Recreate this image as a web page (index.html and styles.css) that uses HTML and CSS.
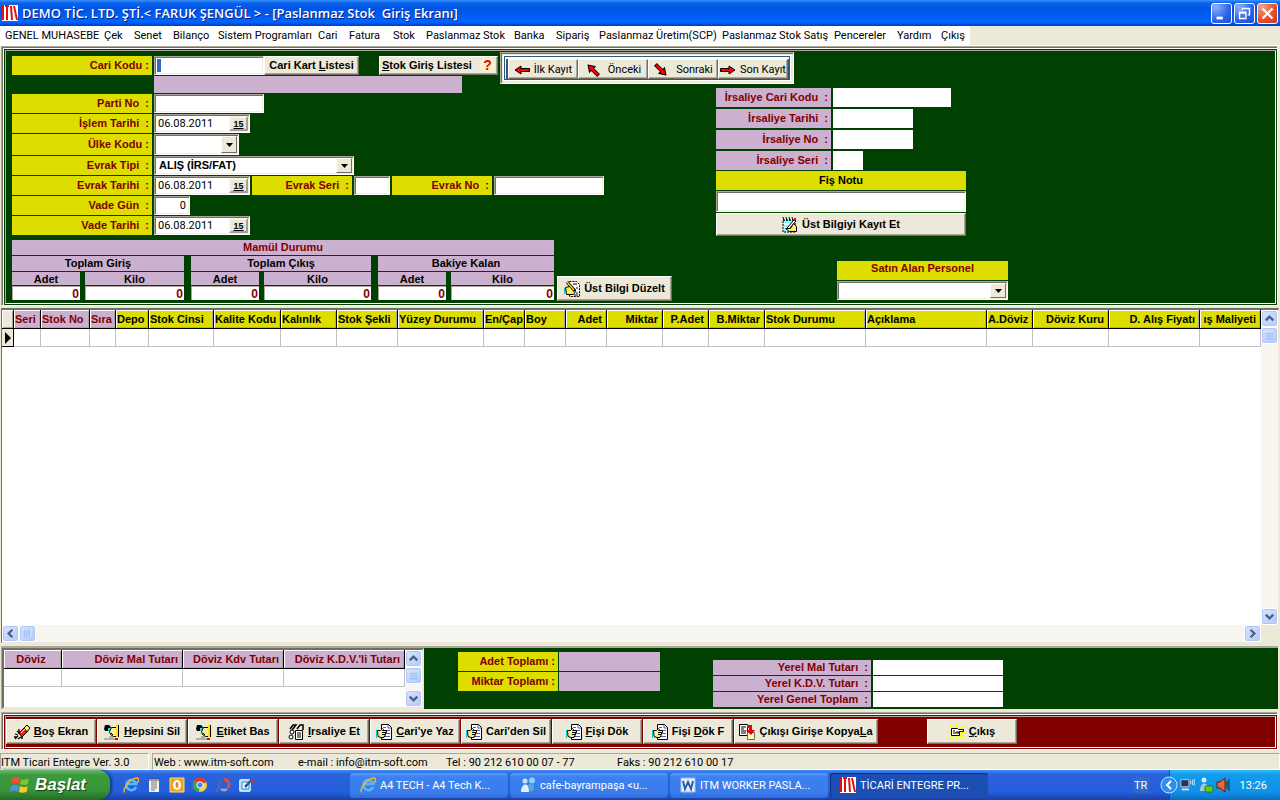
FILE: index.html
```
<!DOCTYPE html>
<html lang="tr">
<head>
<meta charset="utf-8">
<title>Paslanmaz Stok Giriş Ekranı</title>
<link rel="stylesheet" href="styles.css">
</head>
<body>
<svg class="defs" aria-hidden="true">
  <symbol id="logo" viewBox="0 0 16 16"><path fill="#fff" d="M0 0h16v16H0z"/><path fill="#e01010" d="M0 0h2v15H0zM3 0h4v2H6v13H4V2H3zM8 1h2l1 14H9zM11 1h2l3 14h-2z"/></symbol>
  <symbol id="arrow" viewBox="0 0 16 12"><path d="M1 6 7 2v8z" fill="#f00" stroke="#000"/><path d="M7 4.500h8.500v3H7" fill="#f00" stroke="#000"/><path d="M5 5h9v2H5z" fill="#f00"/></symbol>
  <symbol id="hand" viewBox="0 0 16 16"><path d="M5.500.5h7l3 3v12h-10z" fill="#fff" stroke="#000"/><path d="M12 1v3h3M7 3.500h3M8 6.500h6M9 9.500h5M8 12.500h6" fill="none" stroke="#4a5ac0"/><path d="M1.500 6.500h3l2-2 1 1-1 1h4v2h-2 1v2H8h1v2H8v1H5l-3-1z" fill="#fe8" stroke="#000"/><path d="M6 8.500h3M6 10.500h2" stroke="#000"/><path d="M0 6h1v8H0z" fill="#0cd"/></symbol>
  <symbol id="edit" viewBox="0 0 16 16"><path d="M5.500.5h7l3 3v12h-10z" fill="#fff" stroke="#000" stroke-dasharray="2 1"/><path d="M9 3h4M12 7h2M12 12h2M10 14h4" fill="none" stroke="#000"/><path d="M1.500 6.500l4-1 3 3 2-1 1 3-2 3h-7z" fill="#fe5" stroke="#000"/><path d="m3 1 8 9" stroke="#000" stroke-width="3"/><path d="m3 1 7 8" stroke="#fd0" stroke-width="1.500"/><path d="M0 7h1v6H0z" fill="#0cd"/></symbol>
  <symbol id="note" viewBox="0 0 16 16"><path d="M1 3h12v12H1z" fill="#8ff" stroke="#000" stroke-dasharray="2 1"/><path d="M1 0l1 4M4 0l1 4M7 0l1 4M10 0l1 4" stroke="#000" fill="none"/><path d="M2 7h6M2 11h4" stroke="#fff" stroke-width="2"/><path d="m5 11 7-8 2 1-7 8z" fill="#fff" stroke="#000"/><path d="M12 1h2v2h-2z" fill="#e00"/><path d="M3.500 11.500h5l3-5 3 3v5h-7z" fill="#fe6" stroke="#000"/></symbol>
  <symbol id="erase" viewBox="0 0 16 16"><path d="m5 9 6-6 3 4-6 6z" fill="#e22" stroke="#000"/><path d="m10 4 3-3 3 3-3 4z" fill="#ff5" stroke="#000"/><path d="m7 9 5-5" stroke="#fff"/><path d="M1 15l3-3M4 15l3-2M3 7l3 3M1 10l3 1M5 5v3M0 13h3M7 14h2" fill="none" stroke="#000" stroke-width="1.300"/></symbol>
  <symbol id="pen" viewBox="0 0 16 16"><path d="M1 1h4l2 2-2 4H1L0 5z" fill="#000"/><path d="M4 4h3v3H4z" fill="#2de"/><path d="M5.500 7.500l2-4h5v9h-3l-3-2z" fill="#fe8" stroke="#000"/><path d="m7 9 2 2" stroke="#000"/><path d="M12 0h2v13h-2z" fill="#fd2"/><path d="M14.500 1v12" stroke="#000"/><path d="M11 14h3v2h-3z" fill="#e00"/><path d="M0 15h11M5 13h4" stroke="#777"/></symbol>
  <symbol id="glasses" viewBox="0 0 16 16"><path d="M7.500 6.500h7v9h-7z" fill="#fff" stroke="#000"/><path d="M9 9h4M9 11h4M9 13h4" stroke="#000"/><path d="M2 5l3-4h3l-4 5M9 5l3-4h3v5" fill="none" stroke="#000" stroke-width="1.500"/><circle cx="3" cy="13" r="2" fill="#fff" stroke="#000"/><circle cx="4" cy="8" r="2" fill="#fff" stroke="#000"/></symbol>
  <symbol id="copy" viewBox="0 0 16 16"><path d="M.5.500h8v11h-8z" fill="#fff" stroke="#000"/><path d="M2 3h5M2 5h3M2 7h5M2 9h5" stroke="#000"/><path d="M8.500 8.500h7v7h-7z" fill="#ffb" stroke="#665"/><path d="M8 1h5v5h3l-4 5-5-5h3V4H8z" fill="#e00"/></symbol>
  <symbol id="exit" viewBox="0 0 16 16"><path d="m1 1 14 14M15 1 1 15M8 0v16M0 8h16" stroke="#ff0" stroke-width="2"/><path d="M2.500 4.500h6l1 1h5v2h-4v4h-8z" fill="#fff" stroke="#000"/><path d="M4 7h2M7 8h4M4 9h6" stroke="#000"/></symbol>
  <symbol id="up" viewBox="0 0 16 16"><path d="m4 10 4-4 4 4" fill="none" stroke="#4d6185" stroke-width="2.500"/></symbol>
  <symbol id="grip" viewBox="0 0 16 16"><path d="M4 4.500h8M4 6.500h8M4 8.500h8M4 10.500h8" stroke="#eef4fe"/><path d="M4 5.500h8M4 7.500h8M4 9.500h8M4 11.500h8" stroke="#8cb0f8"/></symbol>
  <symbol id="drop" viewBox="0 0 7 4"><path d="M0 0h7L3.500 4z" fill="#000"/></symbol>
  <symbol id="ie" viewBox="0 0 16 16"><path d="M13 10a5 5 0 1 1 .2-3H5" fill="none" stroke="#55b9f5" stroke-width="2.600"/><path d="M2 15C-2 14 7 1 14 1c3 0 1 4 0 5" fill="none" stroke="#f4b528" stroke-width="1.400"/></symbol>
  <symbol id="people" viewBox="0 0 16 16"><circle cx="5" cy="4" r="2.500" fill="#c5e4f8"/><circle cx="12" cy="3.500" r="3" fill="#8fd4f5"/><path d="M1 15c0-10 9-10 8 0z" fill="#e1f1fb"/><path d="M8 8c6-3 7 1 5 6H9z" fill="#58a8dc"/></symbol>
</svg>

<header class="titlebar">
  <svg class="ic16"><use href="#logo"/></svg>
  <h1>DEMO TİC. LTD. ŞTİ.&lt; FARUK ŞENGÜL &gt; - [Paslanmaz Stok&nbsp; Giriş Ekranı]</h1>
  <div class="winbtns">
    <button aria-label="Simge durumuna küçült"><svg viewBox="0 0 21 21"><path d="M5 14h7v3H5z" fill="#fff"/></svg></button>
    <button aria-label="Önceki boyut"><svg viewBox="0 0 21 21"><path d="M8 7V5h8v7h-2M5 9h7v7H5zM5 10h7" fill="none" stroke="#fff" stroke-width="1.500"/></svg></button>
    <button class="close" aria-label="Kapat"><svg viewBox="0 0 21 21"><path d="m5 5 11 11M16 5 5 16" stroke="#fff" stroke-width="2.500"/></svg></button>
  </div>
</header>

<nav class="menubar"><div class="menus">
  <button>GENEL MUHASEBE</button><button>Çek</button><button>Senet</button><button>Bilanço</button><button>Sistem Programları</button><button>Cari</button><button>Fatura</button><button>Stok</button><button>Paslanmaz Stok</button><button>Banka</button><button>Sipariş</button><button>Paslanmaz Üretim(SCP)</button><button>Paslanmaz Stok Satış</button><button>Pencereler</button><button>Yardım</button><button>Çıkış</button>
</div></nav>

<main>
<section class="frame green"><div class="inner top">
  <div class="form">
    <div class="row">
      <label class="lab" for="cari">Cari Kodu :</label>
      <div class="box caret w110"><input id="cari"></div>
      <button class="btn listbtn"><span>Cari Kart <u>L</u>istesi</span></button>
      <button class="btn stokbtn"><span><u>S</u>tok Giriş Listesi</span><span class="q">?</span></button>
    </div>
    <div class="row"><div class="strip"></div></div>
    <div class="row"><label class="lab" for="parti">Parti No&nbsp; :</label><input id="parti" class="box w110"></div>
    <div class="row"><label class="lab" for="islem">İşlem Tarihi&nbsp; :</label><div class="box date"><input id="islem" value="06.08.2011"><button aria-label="Takvim">15</button></div></div>
    <div class="row tall"><label class="lab" for="ulke">Ülke Kodu :</label><div class="box combo w85"><select id="ulke"><option></option></select><i><svg><use href="#drop"/></svg></i></div></div>
    <div class="row"><label class="lab" for="tip">Evrak Tipi&nbsp; :</label><div class="box combo w200"><select id="tip"><option>ALIŞ (İRS/FAT)</option></select><i><svg><use href="#drop"/></svg></i></div></div>
    <div class="row"><label class="lab" for="etarih">Evrak Tarihi&nbsp; :</label><div class="box date"><input id="etarih" value="06.08.2011"><button aria-label="Takvim">15</button></div>
      <label class="lab short" for="seri">Evrak Seri&nbsp; :</label><input id="seri" class="box w36">
      <label class="lab short" for="eno">Evrak No&nbsp; :</label><input id="eno" class="box w110"></div>
    <div class="row"><label class="lab" for="gun">Vade Gün&nbsp; :</label><input id="gun" class="box w36 num" value="0"></div>
    <div class="row"><label class="lab" for="vtarih">Vade Tarihi&nbsp; :</label><div class="box date"><input id="vtarih" value="06.08.2011"><button aria-label="Takvim">15</button></div></div>

    <div class="sumrow">
      <div class="summary">
        <div class="cap">Mamül Durumu</div>
        <div class="groups">
          <div class="group g1"><b>Toplam Giriş</b><label for="a1">Adet</label><label for="k1">Kilo</label><input id="a1" value="0"><input id="k1" value="0"></div>
          <div class="group g2"><b>Toplam Çıkış</b><label for="a2">Adet</label><label for="k2">Kilo</label><input id="a2" value="0"><input id="k2" value="0"></div>
          <div class="group g3"><b>Bakiye Kalan</b><label for="a3">Adet</label><label for="k3">Kilo</label><input id="a3" value="0"><input id="k3" value="0"></div>
        </div>
      </div>
      <button class="btn fix"><svg class="ic16"><use href="#edit"/></svg>Üst Bilgi Düzelt</button>
    </div>
  </div>

  <div class="recnav"><div>
    <button class="btn"><svg><use href="#arrow"/></svg>İlk Kayıt</button>
    <button class="btn wideicon"><svg class="r45"><use href="#arrow"/></svg>Önceki</button>
    <button class="btn wideicon"><svg class="r225"><use href="#arrow"/></svg>Sonraki</button>
    <button class="btn"><svg class="r180"><use href="#arrow"/></svg>Son Kayıt</button>
  </div></div>

  <div class="side">
    <div class="irs">
      <label for="i1">İrsaliye Cari Kodu&nbsp; :</label><input id="i1" class="w118">
      <label for="i2">İrsaliye Tarihi&nbsp; :</label><input id="i2" class="w80">
      <label for="i3">İrsaliye No&nbsp; :</label><input id="i3" class="w80">
      <label for="i4">İrsaliye Seri&nbsp; :</label><input id="i4" class="w30">
    </div>
    <div class="note">
      <label for="fis">Fiş Notu</label><input id="fis" class="box">
      <button class="btn"><svg class="ic16"><use href="#note"/></svg>Üst Bilgiyi Kayıt Et</button>
    </div>
    <div class="buyer">
      <label for="alan">Satın Alan Personel</label>
      <div class="box combo"><select id="alan"><option></option></select><i><svg><use href="#drop"/></svg></i></div>
    </div>
  </div>
</div></section>

<section class="gridbox">
  <div class="sheet">
    <table class="stock">
      <colgroup><col><col><col><col><col><col><col><col><col><col><col><col><col><col><col><col><col><col><col><col><col><col></colgroup>
      <thead><tr><th class="sel"></th><th class="li">Seri</th><th class="li">Stok No</th><th class="li">Sıra</th><th>Depo</th><th>Stok Cinsi</th><th>Kalite Kodu</th><th>Kalınlık</th><th>Stok Şekli</th><th>Yüzey Durumu</th><th>En/Çap</th><th>Boy</th><th class="r">Adet</th><th class="r">Miktar</th><th class="r">P.Adet</th><th class="r">B.Miktar</th><th>Stok Durumu</th><th>Açıklama</th><th class="r">A.Döviz</th><th class="r">Döviz Kuru</th><th class="r">D. Alış Fiyatı</th><th class="r">ış Maliyeti</th></tr></thead>
      <tbody><tr><td class="sel"><svg viewBox="0 0 6 12"><path d="M0 0v12l6-6z"/></svg></td><td></td><td></td><td></td><td></td><td></td><td></td><td></td><td></td><td></td><td></td><td></td><td></td><td></td><td></td><td></td><td></td><td></td><td></td><td></td><td></td><td></td></tr></tbody>
    </table>
  </div>
  <div class="vscroll"><button aria-label="Yukarı"><svg><use href="#up"/></svg></button><button aria-label="Kaydır"><svg><use href="#grip"/></svg></button><button class="end" aria-label="Aşağı"><svg class="r180"><use href="#up"/></svg></button></div>
  <div class="hscroll"><button aria-label="Sola"><svg class="r270"><use href="#up"/></svg></button><button aria-label="Kaydır"><svg class="r90"><use href="#grip"/></svg></button><button class="end" aria-label="Sağa"><svg class="r90"><use href="#up"/></svg></button></div>
  <div class="corner"></div>
</section>

<section class="totals">
  <div class="fxbox">
    <table class="fx">
      <colgroup><col><col><col><col></colgroup>
      <thead><tr><th>Döviz</th><th>Döviz Mal Tutarı</th><th>Döviz Kdv Tutarı</th><th>Döviz K.D.V.'li Tutarı</th></tr></thead>
      <tbody><tr><td></td><td></td><td></td><td></td></tr></tbody>
    </table>
    <div class="vscroll"><button aria-label="Yukarı"><svg><use href="#up"/></svg></button><button aria-label="Kaydır"><svg><use href="#grip"/></svg></button><button class="end" aria-label="Aşağı"><svg class="r180"><use href="#up"/></svg></button></div>
  </div>
  <div class="totbar">
    <div class="qty"><span>Adet Toplamı :</span><output></output><span>Miktar Toplamı :</span><output></output></div>
    <div class="local"><label for="y1">Yerel Mal Tutarı&nbsp; :</label><input id="y1"><label for="y2">Yerel K.D.V. Tutarı&nbsp; :</label><input id="y2"><label for="y3">Yerel Genel Toplam&nbsp; :</label><input id="y3"></div>
  </div>
</section>

<section class="frame red"><div class="inner actions">
  <button class="btn"><svg class="ic16"><use href="#erase"/></svg><span><u>B</u>oş Ekran</span></button>
  <button class="btn"><svg class="ic16"><use href="#pen"/></svg><span><u>H</u>epsini Sil</span></button>
  <button class="btn"><svg class="ic16"><use href="#pen"/></svg><span><u>E</u>tiket Bas</span></button>
  <button class="btn"><svg class="ic16"><use href="#glasses"/></svg><span><u>I</u>rsaliye Et</span></button>
  <button class="btn"><svg class="ic16"><use href="#hand"/></svg><span><u>C</u>ari'ye Yaz</span></button>
  <button class="btn"><svg class="ic16"><use href="#hand"/></svg><span>Cari'den Sil</span></button>
  <button class="btn"><svg class="ic16"><use href="#hand"/></svg><span><u>F</u>işi Dök</span></button>
  <button class="btn"><svg class="ic16"><use href="#hand"/></svg><span>Fişi <u>D</u>ök F</span></button>
  <button class="btn wide"><svg class="ic16"><use href="#copy"/></svg><span>Çıkışı Girişe Kopya<u>L</u>a</span></button>
  <button class="btn out"><svg class="ic16"><use href="#exit"/></svg><span><u>Ç</u>ıkış</span></button>
</div></section>
</main>

<footer class="status">
  <div class="ver">ITM Ticari Entegre Ver. 3.0</div>
  <div class="info"><span>Web : www.itm-soft.com</span><span>e-mail : info@itm-soft.com</span><span>Tel : 90 212 610 00 07 - 77</span><span>Faks : 90 212 610 00 17</span></div>
</footer>

<div class="taskbar">
  <button class="start"><svg viewBox="0 0 18 18"><path d="M2 3q4-2 7 0L8 8Q5 6 1 8z" fill="#f0542c"/><path d="M10 4q4 1 7-1l-1 5q-3 2-7 0z" fill="#7ec930"/><path d="M1 10q4-2 7 0l-1 5q-3-2-7 0z" fill="#4f8ff5"/><path d="M9 10q4 2 7 0l-1 5q-4 2-7 0z" fill="#f8c830"/></svg><span>Başlat</span></button>
  <div class="quick">
    <button aria-label="Internet Explorer"><svg><use href="#ie"/></svg></button>
    <button aria-label="Not Defteri"><svg viewBox="0 0 16 16"><path d="M3 2h10v13H3z" fill="#f2f2ee"/><path d="M5 5h6M5 7h6M5 9h6M5 11h6M5 13h4" stroke="#777"/><path d="M4 1v3M6 1v3M8 1v3M10 1v3M12 1v3" stroke="#445"/></svg></button>
    <button aria-label="Outlook"><svg viewBox="0 0 16 16"><path d="M1 1h14v14H1z" fill="#f3a21c" stroke="#fcd98a"/><ellipse cx="8" cy="8" rx="4" ry="5" fill="#fff"/><ellipse cx="8" cy="8" rx="1.500" ry="3" fill="#e08a10"/></svg></button>
    <button aria-label="Chrome"><svg viewBox="0 0 16 16"><circle cx="8" cy="8" r="7" fill="#f8cf30"/><path d="M8 8 2 4a7 7 0 0 1 12.500 1z" fill="#e2382c"/><path d="M8 8 2 4a7 7 0 0 0 5 11z" fill="#36a548"/><circle cx="8" cy="8" r="3.200" fill="#4a86e8" stroke="#fff"/></svg></button>
    <button aria-label="Senkronizasyon"><svg viewBox="0 0 16 16"><path d="M9 2a6 6 0 0 1 4 9" fill="none" stroke="#e44a38" stroke-width="3"/><path d="M12 12a5 5 0 0 1-6 0" fill="none" stroke="#9aa4c0" stroke-width="2.500"/><path d="M7 3a6 6 0 0 0-3 8l-3 3" fill="none" stroke="#54689c" stroke-width="2"/></svg></button>
    <button aria-label="Masaüstü"><svg viewBox="0 0 16 16"><rect x="1" y="2" width="12" height="13" rx="2" fill="#bfe4fa"/><path d="M4 5h7v7H4z" fill="#fff" stroke="#2a80c8"/><path d="m6 9 7-7 1 2-6 7z" fill="#2458a8"/><path d="M13 3h2v3h-2z" fill="#e03020"/></svg></button>
  </div>
  <div class="tasks">
    <button><svg><use href="#ie"/></svg><span>A4 TECH - A4 Tech K...</span></button>
    <button><svg><use href="#people"/></svg><span>cafe-bayrampaşa &lt;u...</span></button>
    <button><svg viewBox="0 0 16 16"><path d="M1 1h14v14H1z" fill="#e8f0fb" stroke="#9cc0ee"/><path d="m3 4 2 8 3-7 3 7 2-8" fill="none" stroke="#2a5db0" stroke-width="2"/></svg><span>ITM WORKER PASLA...</span></button>
    <button class="on"><svg><use href="#logo"/></svg><span>TİCARİ ENTEGRE PR...</span></button>
  </div>
  <button class="lang">TR</button>
  <div class="tray">
    <button class="chev" aria-label="Gizli simgeler"><svg viewBox="0 0 18 18"><circle cx="9" cy="9" r="8" fill="#2f8df0" stroke="#bfe0ff"/><path d="m11 5-4 4 4 4" fill="none" stroke="#fff" stroke-width="2"/></svg></button>
    <svg viewBox="0 0 18 16"><path d="M1 2h9v8H1z" fill="#28335a" stroke="#c6cede"/><path d="M2 12h8v2H2z" fill="#dfe4ee"/><path d="M12 3v4M14 2v6M16 1v8" stroke="#dbe8ff"/></svg>
    <svg viewBox="0 0 16 16"><circle cx="6" cy="3" r="2.500" fill="#d7ecf5"/><path d="M2 14c0-10 8-10 9 0z" fill="#9fcbe0"/><rect x="7" y="9" width="8" height="6" rx="1" fill="#5bd025" stroke="#2a7a10"/></svg>
    <svg viewBox="0 0 16 16"><path d="M1 5h3l5-4v14l-5-4H1z" fill="#e8663a" stroke="#5a1c0c"/><path d="M11 4v8M13 2v12" stroke="#222"/></svg>
    <time>13:26</time>
  </div>
</div>
</body>
</html>
```
FILE: styles.css
```
* { box-sizing: border-box; }
:root {
  --face: #ece9d8;
  --shade: #aca899;
  --dark: #716f64;
  --green: #004000;
  --yellow: #dddd00;
  --lilac: #cbb1cf;
  --wine: #800000;
}
body {
  margin: 0;
  min-height: 100vh;
  display: flex;
  flex-direction: column;
  background: var(--face);
  font: 11px/13px Roboto, "Liberation Sans", sans-serif;
  color: #000;
}
button, input, select { font: inherit; color: inherit; margin: 0; padding: 0; border: 0; border-radius: 0; min-width: 0; }
button { background: none; white-space: nowrap; }
input { background: #fff; display: block; }
u { text-underline-offset: 1px; }
.defs { position: absolute; width: 0; height: 0; }
.ic16 { width: 16px; height: 16px; flex: none; }
.r45 { transform: rotate(45deg); }
.r90 { transform: rotate(90deg); }
.r180 { transform: rotate(180deg); }
.r225 { transform: rotate(225deg); }
.r270 { transform: rotate(270deg); }

/* Title bar */
.titlebar {
  height: 26px;
  display: flex;
  align-items: center;
  padding: 0 2px;
  gap: 4px;
  background: linear-gradient(#3a93ff 0, #0a62ec 3px, #0054e3 9px, #0060fa 18px, #0066ff 22px, #0046d0 25px, #003dc0 26px);
  color: #fff;
}
.titlebar h1 {
  margin: 0;
  flex: 1;
  font: 600 13px/18px "Open Sans", "Noto Sans", sans-serif;
  text-shadow: 1px 1px #0a1883;
  white-space: nowrap;
}
.winbtns { display: flex; gap: 2px; }
.winbtns button {
  width: 21px;
  height: 21px;
  border: 1px solid #fff;
  border-radius: 3px;
  background: radial-gradient(circle at 20% 15%, #8fb0f8, #2a62ea 60%, #1c4fd0);
}
.winbtns .close { background: radial-gradient(circle at 20% 15%, #f0a088, #e2512c 60%, #c53a12); }
.winbtns svg { display: block; width: 19px; height: 19px; }

/* Menu */
.menubar { height: 20px; border-bottom: 1px solid #fff; }
.menus {
  width: 970px;
  height: 19px;
  padding-left: 5px;
  background: #fff;
  display: grid;
  grid-template-columns: 99px 30px 39px 45px 100px 31px 44px 33px 88px 42px 43px 123px 112px 63px 44px auto;
}
.menus button { text-align: left; }

main { flex: 1; display: flex; flex-direction: column; }

/* Sunken double frame */
.frame {
  margin: 0 2px 0 1px;
  border: 1px solid;
  border-color: var(--shade) #fff #fff var(--shade);
  box-shadow: inset 1px 1px var(--dark), inset 2px 2px #fff;
  padding: 3px 1px 1px 3px;
}
.green { background: var(--green); }
.red { background: var(--wine); }
.inner { border: 1px solid; border-color: var(--shade) #fff #fff var(--shade); }

.top {
  display: grid;
  grid-template-columns: 494px 216px 1fr;
  grid-template-rows: 37px auto;
  padding-bottom: 2px;
}
.form {
  grid-area: 1 / 1 / 3 / 3;
  padding: 5px 0 0 6px;
  display: flex;
  flex-direction: column;
  gap: 1px;
  font: bold 11px/13px "Liberation Sans", Arial, sans-serif;
}
.row { display: flex; gap: 2px; height: 19px; }
.row.tall { height: 21px; }
.row:nth-child(2) { height: 17px; }
.row.tall .lab { padding-top: 4px; }
.lab {
  width: 140px;
  padding: 3px 3px 0 0;
  background: var(--yellow);
  color: var(--wine);
  text-align: right;
  white-space: nowrap;
}
.lab.short { width: 100px; }
.box {
  background: #fff;
  border: 1px solid;
  border-color: var(--shade) #fff #fff var(--shade);
  box-shadow: inset 1px 1px var(--dark), inset -1px -1px #f1efe2;
}
.w30 { width: 30px; }
.w36 { width: 36px; }
.w80 { width: 80px; }
.w85 { width: 85px; }
.w110 { width: 110px; }
.w118 { width: 118px; }
.w200 { width: 200px; }
.num { text-align: right; padding-right: 3px; font-weight: normal; font-family: Roboto, sans-serif; }
.strip { margin-left: 142px; width: 308px; background: var(--lilac); }
.caret { padding: 2px; }
.caret input { width: 100%; height: 13px; border-left: 4px solid #316ac5; }
.date { width: 96px; display: flex; padding: 1px; }
.date input { flex: 1; width: 60px; padding-left: 2px; background: none; font: 11px/13px Roboto, sans-serif; }
.date button {
  width: 19px;
  border: 2px outset #f5f3ea;
  background: var(--face);
  font: bold 9px/10px "Liberation Sans", sans-serif;
  text-decoration: underline;
}
.combo { display: flex; padding: 1px; }
.combo select { flex: 1; appearance: none; background: none; padding-left: 3px; height: 100%; }
.combo i {
  width: 16px;
  display: grid;
  place-items: center;
  background: var(--face);
  border: 1px solid;
  border-color: #fff var(--dark) var(--dark) #fff;
  pointer-events: none;
}
.combo i svg { width: 7px; height: 4px; }

.btn {
  display: flex;
  align-items: center;
  justify-content: center;
  gap: 4px;
  background: var(--face);
  border: 1px solid;
  border-color: #fff var(--dark) var(--dark) #fff;
  box-shadow: inset -1px -1px var(--shade);
  font: bold 11px/13px "Liberation Sans", Arial, sans-serif;
}
.listbtn { width: 95px; margin-left: -2px; }
.stokbtn { width: 119px; margin-left: 18px; justify-content: space-between; padding: 0 2px; }
.q {
  width: 15px;
  border-radius: 7px;
  background: repeating-conic-gradient(#ff3 0 25%, #fffbd0 0 50%) 0 0 / 2px 2px;
  color: #e00;
  font-size: 14px;
  line-height: 15px;
}

.sumrow { display: flex; align-items: flex-end; gap: 3px; padding-top: 4px; }
.summary { width: 542px; text-align: center; }
.cap { height: 15px; line-height: 15px; background: var(--lilac); color: var(--wine); margin-bottom: 1px; }
.groups { display: flex; gap: 7px; }
.group { display: grid; grid-template-rows: 15px 13px 15px; column-gap: 5px; row-gap: 1px; }
.group b { grid-column: 1 / 3; background: var(--lilac); line-height: 15px; }
.group label { background: var(--lilac); line-height: 15px; }
.group input {
  width: 100%;
  height: 14px;
  border-top: 1px solid var(--shade);
  border-left: 1px solid var(--shade);
  text-align: right;
  color: var(--wine);
  font-size: 12px;
  padding-right: 1px;
}
.g1 { grid-template-columns: 68px 99px; }
.g2 { grid-template-columns: 68px 107px; }
.g3 { grid-template-columns: 68px 103px; }
.fix { width: 115px; height: 25px; }

.recnav {
  grid-area: 1 / 2 / 2 / 4;
  justify-self: start;
  align-self: start;
  margin-top: 1px;
  padding: 2px;
  border: 1px solid;
  border-color: var(--shade) #fff #fff var(--shade);
  background: var(--face);
  box-shadow: inset 1px 1px var(--dark);
}
.recnav > div { display: flex; padding: 3px 2px 1px 4px; background: #2c5a7c; border: 1px solid #fff; box-shadow: inset 0 0 0 1px #2c5a7c, inset 1px 2px 0 1px #fff; }
.recnav .btn { width: 70px; height: 20px; padding-top: 1px; font: 11px/13px Roboto, sans-serif; }
.recnav .wideicon { gap: 7px; }
.recnav svg { width: 16px; height: 12px; flex: none; }

.side { grid-area: 2 / 3; font: bold 11px/13px "Liberation Sans", Arial, sans-serif; }
.irs { display: grid; grid-template-columns: 115px auto; grid-auto-rows: 19px; gap: 2px; justify-content: start; }
.irs label { background: var(--lilac); color: var(--wine); text-align: right; padding: 3px 3px 0 0; white-space: nowrap; }
.irs input { height: 19px; }
.note { width: 250px; margin-top: 1px; display: grid; grid-template-rows: 19px 21px 23px; gap: 1px; }
.note label { background: var(--yellow); text-align: center; padding-top: 3px; }
.buyer { width: 171px; margin: 25px 0 0 121px; display: grid; grid-template-rows: 19px 19px; gap: 1px; }
.buyer label { background: var(--yellow); color: var(--wine); text-align: center; padding-top: 1px; }

/* Stock table */
.gridbox {
  flex: 1;
  margin: 2px 1px 0;
  border: 1px solid;
  border-top-width: 2px;
  border-color: var(--dark) var(--face) var(--face) var(--dark);
  background: #fff;
  display: grid;
  grid-template-columns: minmax(0, 1fr) 17px;
  grid-template-rows: 1fr 17px;
}
.sheet { overflow: hidden; }
.corner { background: var(--face); }
table { border-collapse: separate; border-spacing: 0; table-layout: fixed; font: bold 11px/13px "Liberation Sans", Arial, sans-serif; }
th, td { padding: 0 2px 0 1px; white-space: nowrap; overflow: hidden; }
th { height: 19px; border-right: 1px solid #000; border-bottom: 1px solid #000; background: var(--yellow); text-align: left; box-shadow: inset 1px 1px #fff, inset -1px -1px var(--shade); }
td { height: 18px; border-right: 1px solid #c0c0c0; border-bottom: 1px solid #c0c0c0; }
th.r { text-align: right; padding-right: 4px; }
th.li { background: var(--lilac); color: var(--wine); }
.sheet .sel { background: var(--face); border-color: #000; }
.sel svg { display: block; width: 6px; height: 12px; margin-left: 2px; }
.stock { width: 100%; }
.stock col:nth-child(1) { width: 12px; }
.stock col:nth-child(2) { width: 27px; }
.stock col:nth-child(3) { width: 49px; }
.stock col:nth-child(4) { width: 26px; }
.stock col:nth-child(5) { width: 33px; }
.stock col:nth-child(6) { width: 65px; }
.stock col:nth-child(7) { width: 67px; }
.stock col:nth-child(8) { width: 56px; }
.stock col:nth-child(9) { width: 61px; }
.stock col:nth-child(10) { width: 86px; }
.stock col:nth-child(n+11):nth-child(-n+13) { width: 41px; }
.stock col:nth-child(14), .stock col:nth-child(16) { width: 56px; }
.stock col:nth-child(15), .stock col:nth-child(19) { width: 46px; }
.stock col:nth-child(17) { width: 101px; }
.stock col:nth-child(18) { width: 121px; }
.stock col:nth-child(20) { width: 76px; }
.stock col:nth-child(21) { width: 91px; }

.vscroll, .hscroll { display: flex; background: #f6f5f0; }
.vscroll { flex-direction: column; width: 17px; }
.vscroll button, .hscroll button {
  width: 17px;
  height: 17px;
  border: 1px solid #fff;
  border-radius: 3px;
  background: linear-gradient(135deg, #d8e4fe, #b4c9fa);
  box-shadow: inset 0 0 0 1px #b0c6f4;
}
.vscroll .end { margin-top: auto; }
.hscroll .end { margin-left: auto; }
.vscroll svg, .hscroll svg { display: block; width: 15px; height: 15px; }

/* Totals */
.totals { display: flex; margin: 3px 2px 0 1px; border-top: 2px solid var(--shade); border-left: 1px solid var(--shade); }
.fxbox { width: 422px; height: 61px; display: flex; background: #fff; border: 2px solid; border-color: var(--dark) var(--face) var(--face) var(--dark); }
.fx { width: 401px; align-self: flex-start; }
.fx th { background: var(--lilac); color: var(--wine); text-align: right; padding-right: 4px; }
.fx th:first-child { text-align: center; }
.fx col:nth-child(1) { width: 58px; }
.fx col:nth-child(2) { width: 121px; }
.fx col:nth-child(3) { width: 101px; }
.totbar {
  flex: 1;
  display: flex;
  align-items: flex-start;
  gap: 53px;
  padding: 4px 0 0 34px;
  background: var(--green);
  color: var(--wine);
  font: bold 11px/13px "Liberation Sans", Arial, sans-serif;
}
.qty { display: grid; grid-template-columns: 101px 101px; grid-auto-rows: 19px; row-gap: 1px; text-align: right; }
.qty span { background: var(--yellow); padding: 3px 3px 0 0; border-right: 1px solid var(--green); white-space: nowrap; }
.qty output { background: var(--lilac); }
.local { margin-top: 8px; display: grid; grid-template-columns: 158px 130px; grid-auto-rows: 15px; gap: 1px 2px; text-align: right; }
.local label { background: var(--lilac); padding: 1px 3px 0 0; }
.local input { width: 100%; height: 15px; }

/* Actions */
.red { margin-top: 3px; }
.actions { display: flex; gap: 1px; padding: 2px 0 3px; }
.actions .btn { width: 90px; height: 25px; }
.actions .wide { width: 144px; }
.actions .out { margin-left: 48px; }

/* Status */
.status { display: flex; gap: 3px; margin-top: 3px; height: 17px; white-space: nowrap; }
.status div { border: 1px solid; border-color: var(--shade) #fff #fff var(--shade); padding-top: 2px; }
.ver { width: 149px; }
.info { flex: 1; display: grid; grid-template-columns: 144px 148px 171px auto; padding-left: 1px; }

/* Taskbar */
.taskbar {
  height: 30px;
  display: flex;
  color: #fff;
  background: linear-gradient(#3f8cf3 0, #2a63dc 4px, #245edb 22px, #1941a5 30px);
}
.taskbar svg { width: 16px; height: 16px; flex: none; display: block; }
.start {
  width: 110px;
  display: flex;
  align-items: center;
  gap: 5px;
  padding-left: 10px;
  border-radius: 0 12px 12px 0;
  background: linear-gradient(#6cb86c 0, #3c9a3c 5px, #38963a 20px, #246b26 30px);
  box-shadow: 2px 0 3px #123a8a;
  font: italic bold 17px/24px "Liberation Sans", Arial, sans-serif;
  text-shadow: 1px 1px 1px #123f12;
}
.taskbar .start svg { width: 20px; height: 20px; }
.quick { display: flex; align-items: center; gap: 7px; width: 240px; padding-left: 13px; }
.tasks { flex: 1; display: flex; align-items: center; gap: 2px; }
.tasks button {
  width: 158px;
  height: 25px;
  display: flex;
  align-items: center;
  gap: 4px;
  padding-left: 10px;
  border-radius: 3px;
  background: linear-gradient(#5a9cf8, #3c81f0 4px, #3a7cec 20px, #2f6ad8);
}
.tasks .on { background: #1c4fb4; box-shadow: inset 1px 1px 1px #0e2f7c; }
.lang { align-self: center; width: 16px; height: 16px; background: #316ac5; margin-right: 12px; }
.tray { flex: none; display: flex; align-items: center; gap: 2px; padding-right: 13px; margin-left: 8px; background: linear-gradient(#30b8f4 0, #129aec 5px, #0f92e8 22px, #0c6cc0 30px); border-left: 1px solid #0a4fb0; }
.tray .chev { margin-left: -10px; }
.tray .chev svg { width: 18px; height: 18px; }
.tray time { margin-left: 6px; font-size: 11px; }
```
